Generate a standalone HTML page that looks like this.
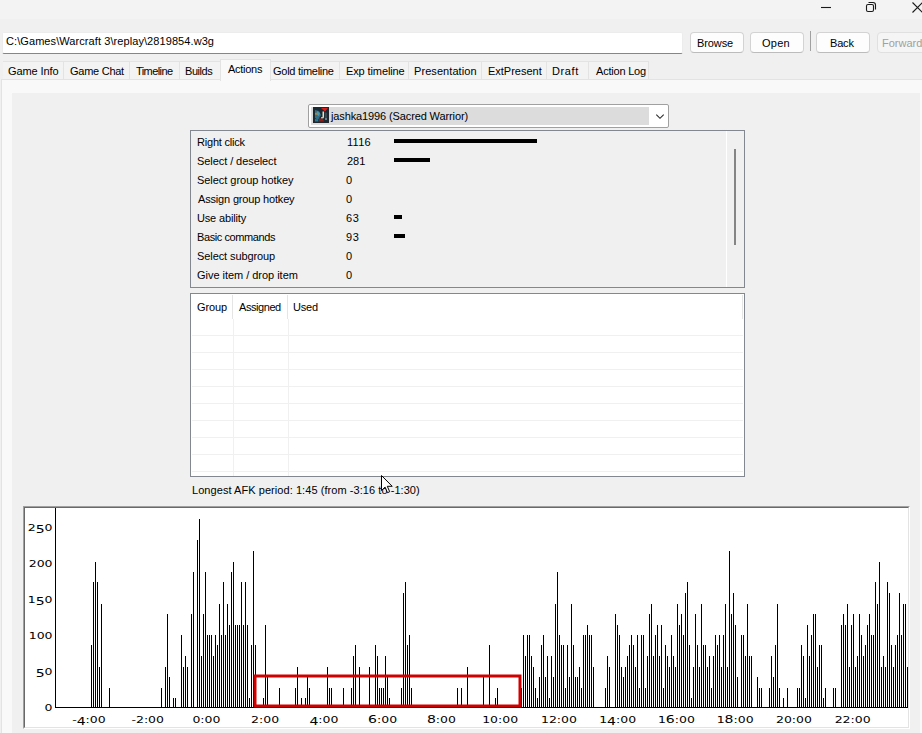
<!DOCTYPE html>
<html><head><meta charset="utf-8"><title>Replay</title>
<style>
html,body{margin:0;padding:0}
body{width:922px;height:733px;overflow:hidden;background:#f0f0f0;position:relative;font-family:"Liberation Sans",sans-serif;font-size:11px;color:#000}
.t{position:absolute;white-space:nowrap;line-height:13px}
.btn{position:absolute;top:32px;height:19px;width:52px;border:1px solid #d3d3d3;border-bottom-color:#bcbcbc;border-radius:4px;background:#fdfdfd;text-align:center;line-height:21px;white-space:nowrap}
.tab{position:absolute;top:61px;height:18px;border:1px solid #e3e3e3;border-bottom:none;border-left:none;box-sizing:border-box;padding-left:6px;line-height:17px;white-space:nowrap;background:#f3f3f3}
.tab.sel{top:59px;height:22px;background:#f9f9f9;border-left:1px solid #e3e3e3;line-height:17px;z-index:2}
.ax text{font-family:"DejaVu Sans",sans-serif;font-size:8px}
.ax .b{font-family:"DejaVu Sans Condensed","DejaVu Sans",sans-serif;font-size:10px}
</style></head><body>
<div style="position:absolute;left:0;top:0;width:922px;height:19px;background:#f3f3f3"></div>
<svg style="position:absolute;left:0;top:0" width="922" height="20" viewBox="0 0 922 20" fill="none" stroke="#1a1a1a" stroke-width="1.1">
<path d="M821 7.5h10"/>
<rect x="866.5" y="4.5" width="7" height="7" rx="1.5"/>
<path d="M868.5 2.5h4.5a2.5 2.5 0 0 1 2.5 2.5v4.5"/>
<path d="M912.5 2.5l10 10M922.5 2.5l-10 10"/>
</svg>
<div style="position:absolute;left:2px;top:32px;width:681px;height:22px;background:#fff;border:1px solid #ececec;border-bottom:1px solid #868686;box-sizing:border-box;border-radius:2px"></div>
<div class="t" style="left:5px;top:35px;letter-spacing:0.08px;margin-left:1px">C:\Games\Warcraft 3\replay\2819854.w3g</div>
<div class="btn" style="left:690px"></div><div class="t" style="left:697px;top:37px;letter-spacing:-0.1px;">Browse</div>
<div class="btn" style="left:750px"></div><div class="t" style="left:762px;top:37px;letter-spacing:0.23px;">Open</div>
<div style="position:absolute;left:810px;top:31px;width:1px;height:20px;background:#a0a0a0"></div>
<div class="btn" style="left:816px"></div><div class="t" style="left:830px;top:37px;letter-spacing:-0.17px;">Back</div>
<div class="btn" style="left:877px;background:#f5f5f5;border-color:#e0e0e0"></div><div class="t" style="left:882px;top:37px;letter-spacing:0.0px;color:#a0a0a0">Forward</div>
<div style="position:absolute;left:1px;top:79px;width:921px;height:654px;background:#f9f9f9;border-top:1px solid #e3e3e3;border-left:1px solid #e3e3e3;box-sizing:border-box"></div>
<div style="position:absolute;left:3px;top:61px;width:1px;height:18px;background:#e3e3e3"></div>
<div class="tab" style="left:3px;width:61px"></div><div class="t" style="left:8px;top:65px;letter-spacing:-0.1px;z-index:3">Game Info</div><div class="tab" style="left:64px;width:66px"></div><div class="t" style="left:70px;top:65px;letter-spacing:-0.26px;z-index:3">Game Chat</div><div class="tab" style="left:130px;width:50px"></div><div class="t" style="left:136px;top:65px;letter-spacing:-0.59px;z-index:3">Timeline</div><div class="tab" style="left:180px;width:41px"></div><div class="t" style="left:185px;top:65px;letter-spacing:-0.46px;z-index:3">Builds</div><div class="tab sel" style="left:220px;width:51px"></div><div class="t" style="left:228px;top:63px;letter-spacing:-0.27px;z-index:3">Actions</div><div class="tab" style="left:271px;width:69px"></div><div class="t" style="left:273px;top:65px;letter-spacing:-0.27px;z-index:3">Gold timeline</div><div class="tab" style="left:340px;width:69px"></div><div class="t" style="left:346px;top:65px;letter-spacing:-0.11px;z-index:3">Exp timeline</div><div class="tab" style="left:409px;width:73px"></div><div class="t" style="left:414px;top:65px;letter-spacing:0.07px;z-index:3">Presentation</div><div class="tab" style="left:482px;width:65px"></div><div class="t" style="left:488px;top:65px;letter-spacing:-0.01px;z-index:3">ExtPresent</div><div class="tab" style="left:547px;width:42px"></div><div class="t" style="left:552px;top:65px;letter-spacing:0.6px;z-index:3">Draft</div><div class="tab" style="left:589px;width:60px"></div><div class="t" style="left:596px;top:65px;letter-spacing:-0.21px;z-index:3">Action Log</div>
<div style="position:absolute;left:12px;top:93px;width:908px;height:640px;background:#f0f0f0"></div>
<!-- combo -->
<div style="position:absolute;left:308px;top:104px;width:361px;height:24px;box-sizing:border-box;border:1px solid #a0a0a0;border-radius:2px;background:#fff"></div>
<div style="position:absolute;left:311px;top:107px;width:338px;height:18px;background:#dcdcdc"></div>
<svg style="position:absolute;left:313px;top:107px" width="16" height="16" viewBox="0 0 16 16">
<rect width="16" height="16" fill="#20262b"/><rect x="1" y="1" width="14" height="14" fill="#1a2a33"/><path d="M8 1h7l-3 3.5z" fill="#d81e1a"/><path d="M2 3l4 1l2 4l-3 5l-3-2z" fill="#2f6f88"/><path d="M4 4l3 2l-1 3l-2-1z" fill="#4b98b0"/><path d="M9.5 4.5h1.5v5.5q0 1.5-2 1.5h-1v-1.2h1.2q.3 0 .3-.6z" fill="#e8e0c0"/><path d="M11.5 5l2.5 1v5l-2 1z" fill="#3a4650"/><path d="M2 6l1.5-.5l.5 2l-1.5.5z" fill="#c98a2a"/><path d="M6 11l4 1l1 2.5h-5z" fill="#8c1d18"/><path d="M2 12l3 .5l.5 2h-3.5z" fill="#2b7691"/><rect x="12" y="11" width="2" height="2" fill="#6b7b86"/>
</svg>
<div class="t" style="left:331px;top:110px;letter-spacing:-0.12px;">jashka1996 (Sacred Warrior)</div>
<svg style="position:absolute;left:654px;top:112px" width="12" height="8" viewBox="0 0 12 8" fill="none" stroke="#2a2a2a" stroke-width="1.1"><path d="M2.3 2.6l3.7 3.7l3.7-3.7"/></svg>
<!-- list 1 -->
<div style="position:absolute;left:190px;top:130px;width:555px;height:158px;box-sizing:border-box;border:1px solid #828790;background:#f0f0f0"></div>
<div style="position:absolute;left:726px;top:131px;width:1px;height:156px;background:#fff"></div>
<div style="position:absolute;left:734px;top:149px;width:2px;height:96px;background:#858585"></div>
<div class="t" style="left:197px;top:136px;letter-spacing:-0.21px;">Right click</div><div class="t" style="left:347px;top:136px;letter-spacing:0.3px;">1116</div><div style="position:absolute;left:394px;top:139px;width:143px;height:4px;background:#000"></div><div class="t" style="left:197px;top:155px;letter-spacing:-0.07px;">Select / deselect</div><div class="t" style="left:347px;top:155px;letter-spacing:0px;">281</div><div style="position:absolute;left:394px;top:158px;width:36px;height:4px;background:#000"></div><div class="t" style="left:197px;top:174px;letter-spacing:-0.04px;">Select group hotkey</div><div class="t" style="left:346px;top:174px;letter-spacing:0.0px;">0</div><div class="t" style="left:198px;top:193px;letter-spacing:-0.17px;">Assign group hotkey</div><div class="t" style="left:346px;top:193px;letter-spacing:0.0px;">0</div><div class="t" style="left:197px;top:212px;letter-spacing:-0.16px;">Use ability</div><div class="t" style="left:346px;top:212px;letter-spacing:0.6px;">63</div><div style="position:absolute;left:394px;top:215px;width:8px;height:4px;background:#000"></div><div class="t" style="left:197px;top:231px;letter-spacing:-0.41px;">Basic commands</div><div class="t" style="left:346px;top:231px;letter-spacing:0.6px;">93</div><div style="position:absolute;left:394px;top:234px;width:11px;height:4px;background:#000"></div><div class="t" style="left:197px;top:250px;letter-spacing:-0.09px;">Select subgroup</div><div class="t" style="left:346px;top:250px;letter-spacing:0.0px;">0</div><div class="t" style="left:197px;top:269px;letter-spacing:-0.03px;">Give item / drop item</div><div class="t" style="left:346px;top:269px;letter-spacing:0.0px;">0</div>
<!-- list 2 -->
<div style="position:absolute;left:190px;top:293px;width:555px;height:184px;box-sizing:border-box;border:1px solid #828790;background:#fff"></div>
<div style="position:absolute;left:232px;top:295px;width:1px;height:24px;background:#e5e5e5"></div>
<div style="position:absolute;left:287px;top:295px;width:1px;height:24px;background:#e5e5e5"></div>
<div style="position:absolute;left:742px;top:295px;width:1px;height:24px;background:#e5e5e5"></div>
<div style="position:absolute;left:192px;top:335px;width:551px;height:1px;background:#f0f0f0"></div><div style="position:absolute;left:192px;top:352px;width:551px;height:1px;background:#f0f0f0"></div><div style="position:absolute;left:192px;top:369px;width:551px;height:1px;background:#f0f0f0"></div><div style="position:absolute;left:192px;top:386px;width:551px;height:1px;background:#f0f0f0"></div><div style="position:absolute;left:192px;top:403px;width:551px;height:1px;background:#f0f0f0"></div><div style="position:absolute;left:192px;top:420px;width:551px;height:1px;background:#f0f0f0"></div><div style="position:absolute;left:192px;top:437px;width:551px;height:1px;background:#f0f0f0"></div><div style="position:absolute;left:192px;top:454px;width:551px;height:1px;background:#f0f0f0"></div><div style="position:absolute;left:192px;top:471px;width:551px;height:1px;background:#f0f0f0"></div><div style="position:absolute;left:233px;top:319px;width:1px;height:157px;background:#f0f0f0"></div><div style="position:absolute;left:288px;top:319px;width:1px;height:157px;background:#f0f0f0"></div>
<div class="t" style="left:197px;top:301px;letter-spacing:-0.1px;">Group</div>
<div class="t" style="left:239px;top:301px;letter-spacing:-0.44px;">Assigned</div>
<div class="t" style="left:293px;top:301px;letter-spacing:-0.17px;">Used</div>
<div class="t" style="left:192px;top:484px;letter-spacing:0.06px;">Longest AFK period: 1:45 (from -3:16 to -1:30)</div>
<svg style="position:absolute;left:380px;top:474px" width="14" height="20" viewBox="0 0 14 20"><path d="M1.5 1.5v15l3.6-3.4l2.4 5.6l2.2-1l-2.4-5.4h4.9z" fill="#fff" stroke="#000" stroke-width="1"/></svg>
<!-- chart -->
<div style="position:absolute;left:23px;top:506px;width:887px;height:223px;box-sizing:border-box;border-top:1px solid #a0a0a0;border-left:1px solid #a0a0a0;border-right:1px solid #fff;border-bottom:1px solid #fff"></div>
<div style="position:absolute;left:24px;top:507px;width:885px;height:221px;box-sizing:border-box;background:#fff;border-top:1px solid #696969;border-left:1px solid #696969;border-right:1px solid #e3e3e3;border-bottom:1px solid #e3e3e3"></div>
<svg style="position:absolute;left:0;top:0" width="922" height="733" viewBox="0 0 922 733" shape-rendering="crispEdges">
<g fill="#000"><rect x="55" y="508" width="1" height="200"/><rect x="55" y="707" width="853" height="1"/><rect x="91" y="645" width="1" height="62"/><rect x="93" y="582" width="1" height="125"/><rect x="95" y="562" width="1" height="145"/><rect x="97" y="582" width="1" height="125"/><rect x="99" y="667" width="1" height="40"/><rect x="101" y="604" width="1" height="103"/><rect x="109" y="688" width="1" height="19"/><rect x="161" y="688" width="1" height="19"/><rect x="165" y="667" width="1" height="40"/><rect x="167" y="614" width="1" height="93"/><rect x="169" y="677" width="1" height="30"/><rect x="173" y="698" width="1" height="9"/><rect x="175" y="698" width="1" height="9"/><rect x="181" y="635" width="1" height="72"/><rect x="183" y="667" width="1" height="40"/><rect x="185" y="656" width="1" height="51"/><rect x="187" y="667" width="1" height="40"/><rect x="191" y="614" width="1" height="93"/><rect x="193" y="572" width="1" height="135"/><rect x="197" y="540" width="1" height="167"/><rect x="199" y="519" width="1" height="188"/><rect x="201" y="656" width="1" height="51"/><rect x="203" y="614" width="1" height="93"/><rect x="205" y="572" width="1" height="135"/><rect x="207" y="635" width="1" height="72"/><rect x="209" y="635" width="1" height="72"/><rect x="211" y="635" width="1" height="72"/><rect x="213" y="656" width="1" height="51"/><rect x="215" y="635" width="1" height="72"/><rect x="217" y="645" width="1" height="62"/><rect x="219" y="604" width="1" height="103"/><rect x="221" y="635" width="1" height="72"/><rect x="223" y="582" width="1" height="125"/><rect x="225" y="635" width="1" height="72"/><rect x="227" y="604" width="1" height="103"/><rect x="229" y="625" width="1" height="82"/><rect x="231" y="572" width="1" height="135"/><rect x="233" y="562" width="1" height="145"/><rect x="235" y="625" width="1" height="82"/><rect x="237" y="625" width="1" height="82"/><rect x="239" y="625" width="1" height="82"/><rect x="241" y="582" width="1" height="125"/><rect x="243" y="625" width="1" height="82"/><rect x="245" y="582" width="1" height="125"/><rect x="247" y="625" width="1" height="82"/><rect x="249" y="698" width="1" height="9"/><rect x="251" y="645" width="1" height="62"/><rect x="253" y="551" width="1" height="156"/><rect x="255" y="645" width="1" height="62"/><rect x="263" y="698" width="1" height="9"/><rect x="265" y="625" width="1" height="82"/><rect x="267" y="677" width="1" height="30"/><rect x="279" y="688" width="1" height="19"/><rect x="295" y="688" width="1" height="19"/><rect x="297" y="667" width="1" height="40"/><rect x="301" y="698" width="1" height="9"/><rect x="305" y="698" width="1" height="9"/><rect x="307" y="677" width="1" height="30"/><rect x="309" y="688" width="1" height="19"/><rect x="327" y="667" width="1" height="40"/><rect x="329" y="688" width="1" height="19"/><rect x="331" y="688" width="1" height="19"/><rect x="343" y="688" width="1" height="19"/><rect x="351" y="688" width="1" height="19"/><rect x="353" y="656" width="1" height="51"/><rect x="355" y="645" width="1" height="62"/><rect x="359" y="667" width="1" height="40"/><rect x="369" y="667" width="1" height="40"/><rect x="375" y="645" width="1" height="62"/><rect x="377" y="656" width="1" height="51"/><rect x="379" y="688" width="1" height="19"/><rect x="381" y="688" width="1" height="19"/><rect x="383" y="688" width="1" height="19"/><rect x="385" y="656" width="1" height="51"/><rect x="387" y="677" width="1" height="30"/><rect x="389" y="698" width="1" height="9"/><rect x="401" y="688" width="1" height="19"/><rect x="403" y="593" width="1" height="114"/><rect x="405" y="582" width="1" height="125"/><rect x="407" y="645" width="1" height="62"/><rect x="409" y="635" width="1" height="72"/><rect x="411" y="688" width="1" height="19"/><rect x="457" y="688" width="1" height="19"/><rect x="461" y="688" width="1" height="19"/><rect x="467" y="667" width="1" height="40"/><rect x="483" y="677" width="1" height="30"/><rect x="489" y="645" width="1" height="62"/><rect x="495" y="698" width="1" height="9"/><rect x="497" y="688" width="1" height="19"/><rect x="521" y="688" width="1" height="19"/><rect x="523" y="635" width="1" height="72"/><rect x="525" y="656" width="1" height="51"/><rect x="527" y="635" width="1" height="72"/><rect x="529" y="635" width="1" height="72"/><rect x="531" y="656" width="1" height="51"/><rect x="533" y="667" width="1" height="40"/><rect x="535" y="688" width="1" height="19"/><rect x="537" y="698" width="1" height="9"/><rect x="539" y="677" width="1" height="30"/><rect x="541" y="645" width="1" height="62"/><rect x="543" y="635" width="1" height="72"/><rect x="545" y="677" width="1" height="30"/><rect x="547" y="656" width="1" height="51"/><rect x="549" y="698" width="1" height="9"/><rect x="551" y="656" width="1" height="51"/><rect x="553" y="677" width="1" height="30"/><rect x="555" y="604" width="1" height="103"/><rect x="557" y="572" width="1" height="135"/><rect x="559" y="635" width="1" height="72"/><rect x="561" y="645" width="1" height="62"/><rect x="563" y="645" width="1" height="62"/><rect x="565" y="688" width="1" height="19"/><rect x="567" y="645" width="1" height="62"/><rect x="569" y="677" width="1" height="30"/><rect x="571" y="604" width="1" height="103"/><rect x="573" y="645" width="1" height="62"/><rect x="575" y="677" width="1" height="30"/><rect x="577" y="677" width="1" height="30"/><rect x="579" y="667" width="1" height="40"/><rect x="581" y="688" width="1" height="19"/><rect x="583" y="635" width="1" height="72"/><rect x="585" y="635" width="1" height="72"/><rect x="587" y="625" width="1" height="82"/><rect x="589" y="635" width="1" height="72"/><rect x="591" y="635" width="1" height="72"/><rect x="593" y="667" width="1" height="40"/><rect x="605" y="688" width="1" height="19"/><rect x="607" y="656" width="1" height="51"/><rect x="609" y="667" width="1" height="40"/><rect x="615" y="614" width="1" height="93"/><rect x="617" y="625" width="1" height="82"/><rect x="619" y="635" width="1" height="72"/><rect x="621" y="667" width="1" height="40"/><rect x="623" y="677" width="1" height="30"/><rect x="625" y="667" width="1" height="40"/><rect x="627" y="656" width="1" height="51"/><rect x="629" y="645" width="1" height="62"/><rect x="631" y="635" width="1" height="72"/><rect x="633" y="645" width="1" height="62"/><rect x="635" y="667" width="1" height="40"/><rect x="637" y="635" width="1" height="72"/><rect x="639" y="688" width="1" height="19"/><rect x="641" y="635" width="1" height="72"/><rect x="643" y="635" width="1" height="72"/><rect x="645" y="688" width="1" height="19"/><rect x="647" y="656" width="1" height="51"/><rect x="649" y="614" width="1" height="93"/><rect x="651" y="604" width="1" height="103"/><rect x="653" y="656" width="1" height="51"/><rect x="655" y="635" width="1" height="72"/><rect x="657" y="625" width="1" height="82"/><rect x="659" y="656" width="1" height="51"/><rect x="661" y="625" width="1" height="82"/><rect x="663" y="688" width="1" height="19"/><rect x="665" y="645" width="1" height="62"/><rect x="667" y="656" width="1" height="51"/><rect x="669" y="667" width="1" height="40"/><rect x="671" y="635" width="1" height="72"/><rect x="673" y="656" width="1" height="51"/><rect x="675" y="667" width="1" height="40"/><rect x="677" y="604" width="1" height="103"/><rect x="679" y="625" width="1" height="82"/><rect x="681" y="614" width="1" height="93"/><rect x="683" y="635" width="1" height="72"/><rect x="685" y="593" width="1" height="114"/><rect x="687" y="582" width="1" height="125"/><rect x="689" y="645" width="1" height="62"/><rect x="691" y="698" width="1" height="9"/><rect x="693" y="667" width="1" height="40"/><rect x="695" y="614" width="1" height="93"/><rect x="697" y="645" width="1" height="62"/><rect x="699" y="667" width="1" height="40"/><rect x="701" y="604" width="1" height="103"/><rect x="703" y="645" width="1" height="62"/><rect x="705" y="645" width="1" height="62"/><rect x="707" y="667" width="1" height="40"/><rect x="709" y="656" width="1" height="51"/><rect x="711" y="688" width="1" height="19"/><rect x="713" y="656" width="1" height="51"/><rect x="715" y="635" width="1" height="72"/><rect x="717" y="645" width="1" height="62"/><rect x="719" y="635" width="1" height="72"/><rect x="721" y="667" width="1" height="40"/><rect x="723" y="635" width="1" height="72"/><rect x="725" y="604" width="1" height="103"/><rect x="727" y="667" width="1" height="40"/><rect x="729" y="551" width="1" height="156"/><rect x="731" y="614" width="1" height="93"/><rect x="733" y="593" width="1" height="114"/><rect x="735" y="625" width="1" height="82"/><rect x="737" y="677" width="1" height="30"/><rect x="741" y="635" width="1" height="72"/><rect x="743" y="635" width="1" height="72"/><rect x="745" y="656" width="1" height="51"/><rect x="747" y="604" width="1" height="103"/><rect x="749" y="656" width="1" height="51"/><rect x="751" y="656" width="1" height="51"/><rect x="757" y="677" width="1" height="30"/><rect x="759" y="688" width="1" height="19"/><rect x="761" y="688" width="1" height="19"/><rect x="769" y="688" width="1" height="19"/><rect x="771" y="656" width="1" height="51"/><rect x="773" y="677" width="1" height="30"/><rect x="775" y="645" width="1" height="62"/><rect x="777" y="604" width="1" height="103"/><rect x="779" y="688" width="1" height="19"/><rect x="783" y="698" width="1" height="9"/><rect x="787" y="688" width="1" height="19"/><rect x="797" y="688" width="1" height="19"/><rect x="799" y="688" width="1" height="19"/><rect x="801" y="645" width="1" height="62"/><rect x="803" y="656" width="1" height="51"/><rect x="805" y="698" width="1" height="9"/><rect x="807" y="625" width="1" height="82"/><rect x="809" y="656" width="1" height="51"/><rect x="811" y="635" width="1" height="72"/><rect x="813" y="614" width="1" height="93"/><rect x="815" y="614" width="1" height="93"/><rect x="817" y="667" width="1" height="40"/><rect x="819" y="645" width="1" height="62"/><rect x="821" y="645" width="1" height="62"/><rect x="823" y="698" width="1" height="9"/><rect x="825" y="688" width="1" height="19"/><rect x="833" y="688" width="1" height="19"/><rect x="835" y="688" width="1" height="19"/><rect x="841" y="625" width="1" height="82"/><rect x="843" y="614" width="1" height="93"/><rect x="845" y="625" width="1" height="82"/><rect x="847" y="604" width="1" height="103"/><rect x="849" y="667" width="1" height="40"/><rect x="851" y="625" width="1" height="82"/><rect x="853" y="614" width="1" height="93"/><rect x="855" y="667" width="1" height="40"/><rect x="857" y="656" width="1" height="51"/><rect x="859" y="614" width="1" height="93"/><rect x="861" y="635" width="1" height="72"/><rect x="863" y="656" width="1" height="51"/><rect x="865" y="645" width="1" height="62"/><rect x="867" y="625" width="1" height="82"/><rect x="869" y="614" width="1" height="93"/><rect x="871" y="635" width="1" height="72"/><rect x="873" y="635" width="1" height="72"/><rect x="875" y="582" width="1" height="125"/><rect x="877" y="604" width="1" height="103"/><rect x="879" y="562" width="1" height="145"/><rect x="881" y="667" width="1" height="40"/><rect x="883" y="656" width="1" height="51"/><rect x="885" y="667" width="1" height="40"/><rect x="887" y="582" width="1" height="125"/><rect x="889" y="593" width="1" height="114"/><rect x="891" y="645" width="1" height="62"/><rect x="893" y="667" width="1" height="40"/><rect x="895" y="645" width="1" height="62"/><rect x="897" y="635" width="1" height="72"/><rect x="899" y="593" width="1" height="114"/><rect x="901" y="635" width="1" height="72"/><rect x="903" y="604" width="1" height="103"/><rect x="905" y="604" width="1" height="103"/><rect x="907" y="667" width="1" height="40"/></g>
<rect x="255" y="676" width="265" height="30" fill="none" stroke="#d00000" stroke-width="3" shape-rendering="auto"/>
<g class="ax" fill="#000" shape-rendering="auto"><text transform="translate(52.5,531) scale(1.56,1)" text-anchor="end">2<tspan class="b" dy="2">5</tspan><tspan dy="-2">0</tspan></text><text transform="translate(52.5,567) scale(1.56,1)" text-anchor="end">200</text><text transform="translate(52.5,603) scale(1.56,1)" text-anchor="end">1<tspan class="b" dy="2">5</tspan><tspan dy="-2">0</tspan></text><text transform="translate(52.5,639) scale(1.56,1)" text-anchor="end">100</text><text transform="translate(52.5,675) scale(1.56,1)" text-anchor="end"><tspan class="b" dy="2">5</tspan><tspan dy="-2">0</tspan></text><text transform="translate(52.5,711) scale(1.56,1)" text-anchor="end">0</text><text transform="translate(88.9,723) scale(1.56,1)" text-anchor="middle">-<tspan class="b" dy="2">4</tspan><tspan dy="-2">:</tspan>00</text><text transform="translate(147.7,723) scale(1.56,1)" text-anchor="middle">-2:00</text><text transform="translate(206.4,723) scale(1.56,1)" text-anchor="middle">0:00</text><text transform="translate(265.1,723) scale(1.56,1)" text-anchor="middle">2:00</text><text transform="translate(323.9,723) scale(1.56,1)" text-anchor="middle"><tspan class="b" dy="2">4</tspan><tspan dy="-2">:</tspan>00</text><text transform="translate(382.6,723) scale(1.56,1)" text-anchor="middle"><tspan class="b" dy="0">6</tspan>:00</text><text transform="translate(441.4,723) scale(1.56,1)" text-anchor="middle"><tspan class="b" dy="0">8</tspan>:00</text><text transform="translate(500.1,723) scale(1.56,1)" text-anchor="middle">10:00</text><text transform="translate(558.9,723) scale(1.56,1)" text-anchor="middle">12:00</text><text transform="translate(617.6,723) scale(1.56,1)" text-anchor="middle">1<tspan class="b" dy="2">4</tspan><tspan dy="-2">:</tspan>00</text><text transform="translate(676.4,723) scale(1.56,1)" text-anchor="middle">1<tspan class="b" dy="0">6</tspan>:00</text><text transform="translate(735.1,723) scale(1.56,1)" text-anchor="middle">1<tspan class="b" dy="0">8</tspan>:00</text><text transform="translate(793.9,723) scale(1.56,1)" text-anchor="middle">20:00</text><text transform="translate(852.6,723) scale(1.56,1)" text-anchor="middle">22:00</text></g>
</svg>
</body></html>
